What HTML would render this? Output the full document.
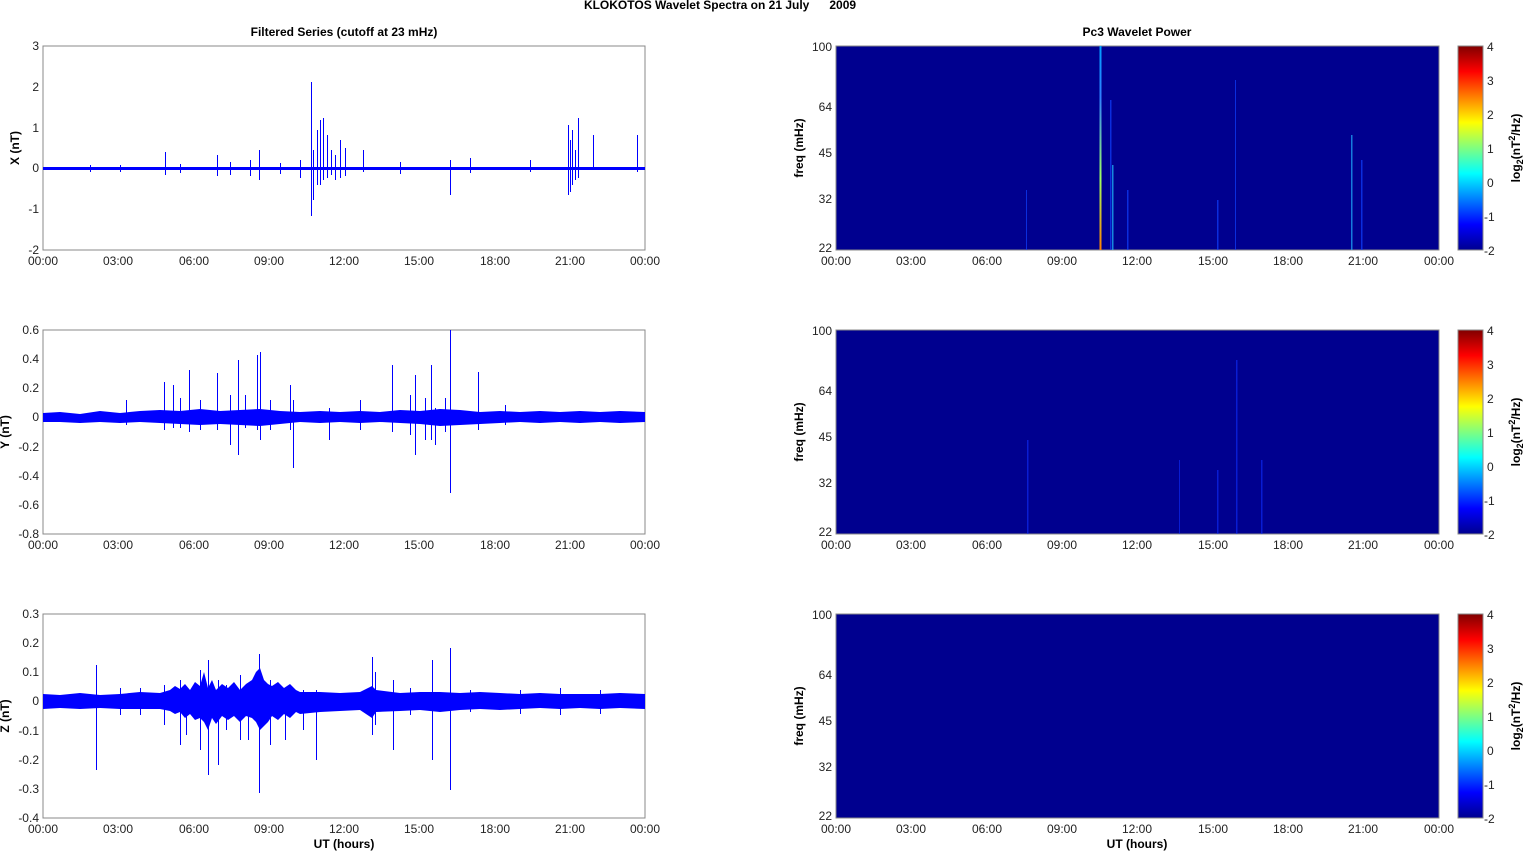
<!DOCTYPE html>
<html><head><meta charset="utf-8"><style>
html,body{margin:0;padding:0;background:#fff;}
svg{display:block;font-family:"Liberation Sans",Arial,sans-serif;}
</style></head><body>
<svg width="1526" height="851" viewBox="0 0 1526 851" xmlns="http://www.w3.org/2000/svg">
<defs>
<linearGradient id="jet" x1="0" y1="1" x2="0" y2="0">
<stop offset="0" stop-color="#00008f"/><stop offset="0.125" stop-color="#0000ff"/>
<stop offset="0.375" stop-color="#00ffff"/><stop offset="0.625" stop-color="#ffff00"/>
<stop offset="0.875" stop-color="#ff0000"/><stop offset="1" stop-color="#800000"/>
</linearGradient>
<linearGradient id="streak" x1="0" y1="1" x2="0" y2="0">
<stop offset="0" stop-color="#ff8000"/><stop offset="0.35" stop-color="#a0ff60"/><stop offset="0.75" stop-color="#3080ff"/><stop offset="1" stop-color="#00a0ff"/>
</linearGradient>
<g id="xt" font-size="12" fill="#222" text-anchor="middle">
<text x="43" y="265">00:00</text><text x="118" y="265">03:00</text><text x="194" y="265">06:00</text><text x="269" y="265">09:00</text><text x="344" y="265">12:00</text><text x="419" y="265">15:00</text><text x="495" y="265">18:00</text><text x="570" y="265">21:00</text><text x="645" y="265">00:00</text>
</g>
<g id="xt2" font-size="12" fill="#222" text-anchor="middle">
<text x="836" y="265">00:00</text><text x="911" y="265">03:00</text><text x="987" y="265">06:00</text><text x="1062" y="265">09:00</text><text x="1137" y="265">12:00</text><text x="1213" y="265">15:00</text><text x="1288" y="265">18:00</text><text x="1363" y="265">21:00</text><text x="1439" y="265">00:00</text>
</g>
<g id="rp">
<rect x="836" y="46" width="603" height="204" fill="#00008f" stroke="#888" stroke-width="1"/>
<g font-size="12" fill="#222" text-anchor="end">
<text x="832" y="51">100</text><text x="832" y="111">64</text><text x="832" y="157">45</text><text x="832" y="203">32</text><text x="832" y="252">22</text></g>
<text transform="translate(803,148) rotate(-90)" font-size="12" font-weight="bold" text-anchor="middle" fill="#000">freq (mHz)</text>
<rect x="1458" y="46" width="25" height="204" fill="url(#jet)" stroke="#888"/>
<g font-size="12" fill="#222">
<text x="1487" y="51">4</text><text x="1487" y="85">3</text><text x="1487" y="119">2</text><text x="1487" y="153">1</text><text x="1487" y="187">0</text><text x="1484" y="221">-1</text><text x="1484" y="255">-2</text></g>
<text transform="translate(1520,148) rotate(-90)" font-size="12" font-weight="bold" text-anchor="middle" fill="#000">log<tspan font-size="9" dy="3">2</tspan><tspan dy="-3">(nT</tspan><tspan font-size="9" dy="-5">2</tspan><tspan dy="5">/Hz)</tspan></text>
<use href="#xt2"/>
</g>
</defs>

<text x="720" y="9" font-size="12" font-weight="bold" text-anchor="middle">KLOKOTOS Wavelet Spectra on 21 July&#160;&#160;&#160;&#160;&#160; 2009</text>
<text x="344" y="36" font-size="12" font-weight="bold" text-anchor="middle">Filtered Series (cutoff at 23 mHz)</text>
<text x="1137" y="36" font-size="12" font-weight="bold" text-anchor="middle">Pc3 Wavelet Power</text>

<!-- Left X -->
<rect x="43" y="46" width="602" height="204" fill="#fff" stroke="#888"/>
<rect x="43" y="167" width="602" height="3" fill="#0000ff"/>
<g stroke="#0000ff" stroke-width="1" fill="none" transform="translate(0.5,0)">
<path d="M165 152V175M217 155V176M230 162V175M259 150V180M311 82V216M313 200V150M317 130V185M320 120V185M323 118V180M327 135V178M331 150V175M340 140V178M345 148V176M363 150V172M450 160V195M470 158V173M530 160V172M568 125V195M570 140V192M572 130V185M575 150V180M578 118V178M593 135V170M637 135V172M250 160V176M400 162V174M180 164V173M120 165V172M90 165V172M280 163V174M300 160V178M335 155V180"/>
</g>
<g font-size="12" fill="#222" text-anchor="end"><text x="39" y="50">3</text><text x="39" y="91">2</text><text x="39" y="132">1</text><text x="39" y="172">0</text><text x="39" y="213">-1</text><text x="39" y="254">-2</text></g>
<text transform="translate(19,148) rotate(-90)" font-size="12" font-weight="bold" text-anchor="middle">X (nT)</text>
<use href="#xt"/>

<!-- Left Y -->
<rect x="43" y="330" width="602" height="204" fill="#fff" stroke="#888"/>
<polygon fill="#0000ff" points="43,413 60,412 80,414 100,411 120,413 140,411 160,410 180,411 200,409 220,411 240,410 260,409 280,411 300,412 320,411 340,412 360,411 380,412 400,410 420,411 440,409 460,410 480,412 500,411 520,412 540,411 560,412 580,411 600,412 620,411 645,412 645,422 620,423 600,422 580,423 560,422 540,423 520,422 500,423 480,424 460,425 440,426 420,424 400,423 380,422 360,423 340,422 320,423 300,422 280,424 260,426 240,425 220,424 200,425 180,424 160,423 140,422 120,423 100,422 80,423 60,422 43,422"/>
<g stroke="#0000ff" stroke-width="1" fill="none" transform="translate(0.5,0)">
<path d="M126 400V425M164 382V430M173 385V428M189 370V432M217 373V430M238 360V455M257 355V430M260 352V440M290 385V430M293 400V468M329 408V440M392 365V432M415 375V455M431 365V440M435 408V445M450 330V493M478 372V430M360 400V430M505 405V425M230 395V445M180 398V428M200 400V430M245 395V428M270 400V430M410 395V435M425 398V440M445 398V432"/>
</g>
<g font-size="12" fill="#222" text-anchor="end"><text x="39" y="334">0.6</text><text x="39" y="363">0.4</text><text x="39" y="392">0.2</text><text x="39" y="421">0</text><text x="39" y="451">-0.2</text><text x="39" y="480">-0.4</text><text x="39" y="509">-0.6</text><text x="39" y="538">-0.8</text></g>
<text transform="translate(9,432) rotate(-90)" font-size="12" font-weight="bold" text-anchor="middle">Y (nT)</text>
<use href="#xt" y="284"/>

<!-- Left Z -->
<rect x="43" y="614" width="602" height="204" fill="#fff" stroke="#888"/>
<polygon fill="#0000ff" points="43,694 60,695 80,693 100,695 120,694 140,692 160,693 170,690 175,686 180,689 185,684 190,690 195,682 200,686 204,672 208,688 212,680 216,690 222,684 228,688 234,682 240,690 246,684 252,680 256,672 260,668 264,680 268,684 272,686 278,682 284,688 290,684 296,690 300,692 320,692 340,693 360,692 372,686 376,690 400,693 420,692 440,692 460,693 480,692 500,693 520,694 540,693 560,694 580,694 600,694 620,693 645,694 645,709 620,708 600,709 580,708 560,709 540,708 520,709 500,710 480,709 460,710 440,712 420,710 400,711 376,712 372,718 360,710 340,711 320,712 300,714 296,712 290,718 284,714 278,720 272,716 268,722 264,726 260,730 256,722 252,718 246,716 240,722 234,716 228,720 222,716 216,724 212,718 208,730 204,722 200,718 195,720 190,714 185,718 180,712 175,714 170,711 160,709 140,709 120,709 100,708 80,709 60,708 43,709"/>
<g stroke="#0000ff" stroke-width="1" fill="none" transform="translate(0.5,0)">
<path d="M96 665V770M208 660V775M259 654V793M218 680V765M372 657V735M432 660V760M450 648V790M316 690V760M393 680V750M200 670V750M180 680V745M240 675V740M270 680V745M285 690V740M375 672V725M164 685V725M186 690V735M226 685V730M248 690V740M303 690V730M120 688V715M140 688V715M410 688V715M470 690V712M520 690V714M560 688V715M600 690V714"/>
</g>
<g font-size="12" fill="#222" text-anchor="end"><text x="39" y="618">0.3</text><text x="39" y="647">0.2</text><text x="39" y="676">0.1</text><text x="39" y="705">0</text><text x="39" y="735">-0.1</text><text x="39" y="764">-0.2</text><text x="39" y="793">-0.3</text><text x="39" y="822">-0.4</text></g>
<text transform="translate(9,716) rotate(-90)" font-size="12" font-weight="bold" text-anchor="middle">Z (nT)</text>
<use href="#xt" y="568"/>
<text x="344" y="848" font-size="12" font-weight="bold" text-anchor="middle">UT (hours)</text>

<!-- Right panels -->
<use href="#rp"/>
<rect x="1099.5" y="46" width="2" height="204" fill="url(#streak)"/>
<g fill="#1040ff" opacity="0.7">
<rect x="1110" y="100" width="1.5" height="150"/><rect x="1112" y="165" width="1.5" height="85" fill="#20c0ff"/>
<rect x="1127" y="190" width="1.5" height="60"/><rect x="1351" y="135" width="1.5" height="115" fill="#20b0ff"/>
<rect x="1361" y="160" width="1.5" height="90"/><rect x="1026" y="190" width="1" height="60"/><rect x="1217" y="200" width="1.5" height="50"/><rect x="1235" y="80" width="1" height="170"/>
</g>
<use href="#rp" y="284"/>
<g fill="#1030ff" opacity="0.6">
<rect x="1027" y="440" width="1.5" height="94"/><rect x="1236" y="360" width="1.5" height="174"/><rect x="1217" y="470" width="1.5" height="64"/><rect x="1261" y="460" width="1.5" height="74"/><rect x="1179" y="460" width="1" height="74"/>
</g>
<use href="#rp" y="568"/>
<text x="1137" y="848" font-size="12" font-weight="bold" text-anchor="middle">UT (hours)</text>
</svg>
</body></html>
